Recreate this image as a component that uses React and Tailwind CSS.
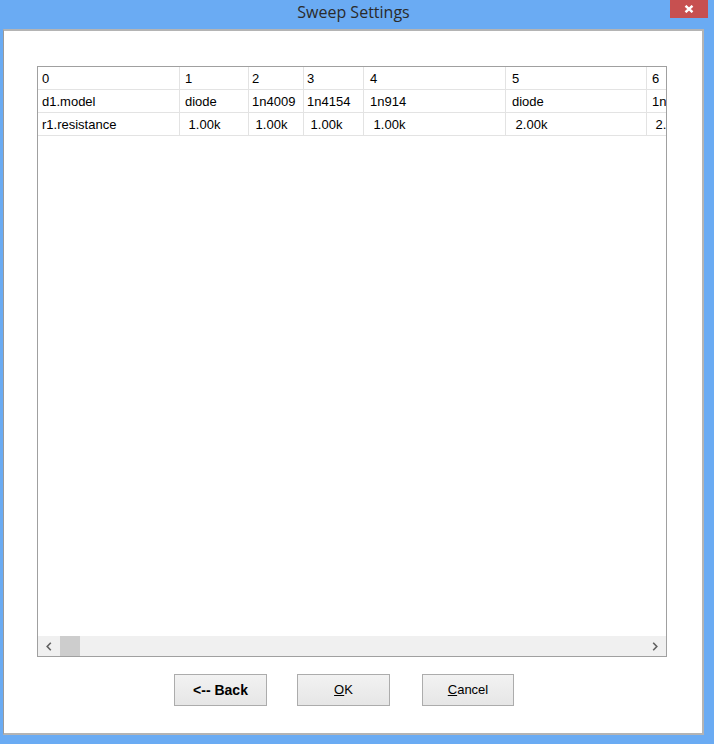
import React from "react";

const cols = [
  { w: 142, pad: 4 },
  { w: 69, pad: 5 },
  { w: 55, pad: 3 },
  { w: 60, pad: 3 },
  { w: 142, pad: 6 },
  { w: 141, pad: 6 },
  { w: 100, pad: 5 },
];

const rows = [
  ["0", "1", "2", "3", "4", "5", "6"],
  ["d1.model", "diode", "1n4009", "1n4154", "1n914", "diode", "1n4009"],
  ["r1.resistance", " 1.00k", " 1.00k", " 1.00k", " 1.00k", " 2.00k", " 2.00k"],
];

function Row({ cells }) {
  return (
    <div className="flex h-[23px] shrink-0 border-b border-[#e3e3e3]">
      {cells.map((c, i) => (
        <div
          key={i}
          className="shrink-0 h-full flex items-center pt-[1px] border-r border-[#e3e3e3] whitespace-pre overflow-hidden"
          style={{ width: cols[i].w, paddingLeft: cols[i].pad }}
        >
          {c}
        </div>
      ))}
    </div>
  );
}

export default function App() {
  return (
    <div
      className="w-[714px] h-[744px] bg-[#6aabf3] flex flex-col overflow-hidden"
      style={{ fontFamily: '"Liberation Sans", Arial, sans-serif' }}
    >
      <div className="h-[29px] shrink-0 flex items-start pl-[3px] pr-[6px]">
        <div className="flex-1 flex justify-center pt-[2px] pr-[6px]">
          <span
            className="text-[16px] text-[#2a2a2a] leading-[20px]"
            style={{ fontFamily: '"Open Sans", "Noto Sans", sans-serif' }}
          >
            Sweep Settings
          </span>
        </div>
        <div className="w-[38px] h-[18px] bg-[#c75050] flex items-center justify-center -ml-[40px]">
          <svg width="10" height="8" viewBox="0 0 10 8">
            <path d="M1.5 0.8 L8.5 7.2 M8.5 0.8 L1.5 7.2" stroke="#fff" strokeWidth="2.4" />
          </svg>
        </div>
      </div>
      <div className="flex-1 ml-[3px] mr-[10px] mb-[9px] bg-white border-l border-l-[#9a9a9a] border-t-2 border-t-[#b4b4b4] border-r-2 border-r-[#b4b4b4] border-b-2 border-b-[#b4b4b4] flex flex-col">
        <div className="ml-[33px] mr-[35px] mt-[35px] h-[591px] border border-[#a0a0a0] flex flex-col text-[13px] text-black overflow-hidden">
          <div className="flex-1 flex flex-col overflow-hidden">
            {rows.map((r, i) => (
              <Row key={i} cells={r} />
            ))}
          </div>
          <div className="h-[20px] shrink-0 bg-[#f0f0f0] flex items-stretch">
            <div className="w-[22px] flex items-center justify-center">
              <svg width="6" height="9" viewBox="0 0 6 9">
                <path d="M4.8 0.8 L1.2 4.5 L4.8 8.2" stroke="#606060" strokeWidth="1.6" fill="none" />
              </svg>
            </div>
            <div className="w-[20px] bg-[#cdcdcd]" />
            <div className="flex-1" />
            <div className="w-[22px] flex items-center justify-center">
              <svg width="6" height="9" viewBox="0 0 6 9">
                <path d="M1.2 0.8 L4.8 4.5 L1.2 8.2" stroke="#606060" strokeWidth="1.6" fill="none" />
              </svg>
            </div>
          </div>
        </div>
        <div className="flex mt-[17px] ml-[170px]">
          <button className="w-[93px] h-[32px] border border-[#acacac] bg-gradient-to-b from-[#f2f2f2] to-[#e6e6e6] text-[14px] font-bold text-black flex items-center justify-center">
            &lt;-- Back
          </button>
          <button className="ml-[30px] w-[93px] h-[32px] border border-[#acacac] bg-gradient-to-b from-[#f2f2f2] to-[#e6e6e6] text-[13px] text-black flex items-center justify-center">
            <span><u>O</u>K</span>
          </button>
          <button className="ml-[32px] w-[92px] h-[32px] border border-[#acacac] bg-gradient-to-b from-[#f2f2f2] to-[#e6e6e6] text-[13px] text-black flex items-center justify-center">
            <span><u>C</u>ancel</span>
          </button>
        </div>
      </div>
    </div>
  );
}
